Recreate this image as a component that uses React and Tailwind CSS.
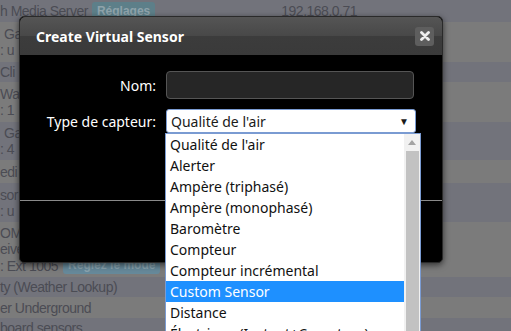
import React from 'react';

const options = [
  "Qualité de l'air",
  'Alerter',
  'Ampère (triphasé)',
  'Ampère (monophasé)',
  'Baromètre',
  'Compteur',
  'Compteur incrémental',
  'Custom Sensor',
  'Distance',
  'Électrique (Instant+Compteur)',
];

function Row({ h, shade, children }) {
  return (
    <div className={`${h} ${shade ? 'bg-[#72737b]' : 'bg-[#7b7b7b]'} flex flex-col justify-center`}>
      {children}
    </div>
  );
}

function Background() {
  return (
    <div
      className="text-[14px] tracking-[-0.5px] leading-[16px] text-[#4b4c54]"
      style={{ fontFamily: '"Liberation Sans", Arial, sans-serif' }}
    >
      <Row h="h-[22px]" shade>
        <div className="flex items-center">
          <span>h Media Server</span>
          <span className="ml-[4px] px-[5px] rounded-[3px] bg-[#5d7f89] text-[#8fa3ab] font-bold text-[12px] tracking-normal leading-[18px]">Réglages</span>
          <span className="ml-[126px]">192.168.0.71</span>
        </div>
      </Row>
      <Row h="h-[40px]">
        <div className="pl-[4px]">Ga</div>
        <div>: u</div>
      </Row>
      <Row h="h-[20px]" shade>
        <div>Cli</div>
      </Row>
      <Row h="h-[40px]">
        <div>Wa</div>
        <div>: 1</div>
      </Row>
      <Row h="h-[38px]" shade>
        <div className="pl-[4px]">Ga</div>
        <div>: 4</div>
      </Row>
      <Row h="h-[23px]">
        <div>edi</div>
      </Row>
      <Row h="h-[39px]" shade>
        <div>sor</div>
        <div>: u</div>
      </Row>
      <Row h="h-[55px]">
        <div>OM</div>
        <div>eive</div>
        <div className="flex items-center">
          <span>: Ext 1005</span>
          <span className="ml-[5px] px-[5px] rounded-[3px] bg-[#66899a] text-[#8aa3ae] font-bold text-[12px] tracking-normal leading-[17px]">Réglez le mode</span>
        </div>
      </Row>
      <Row h="h-[20px]" shade>
        <div>ty (Weather Lookup)</div>
      </Row>
      <Row h="h-[21px]">
        <div>er Underground</div>
      </Row>
      <Row h="h-[20px]" shade>
        <div>board sensors</div>
      </Row>
    </div>
  );
}

export default function App() {
  return (
    <div
      className="relative w-[511px] h-[331px] overflow-hidden"
      style={{ fontFamily: '"Noto Sans", "Open Sans", sans-serif' }}
    >
      <Background />

      <div className="absolute left-[19px] top-[16px] w-[424px] h-[247px] bg-black rounded-[5px] border border-[#2a2a2a] shadow-[0_2px_6px_rgba(0,0,0,0.6)] flex flex-col overflow-hidden">
        <div className="h-[38px] bg-[linear-gradient(#555_0%,#484848_50%,#3c3c3c_51%,#3a3a3a_100%)] flex items-center justify-between pl-[16px] pr-[8px] rounded-t-[5px]">
          <span className="text-white font-bold text-[14px]">Create Virtual Sensor</span>
          <span className="w-[19px] h-[19px] rounded-[3px] bg-[#5e5e5e] flex items-center justify-center">
            <svg width="10" height="10" viewBox="0 0 10 10">
              <path d="M1.5 1.5 L8.5 8.5 M8.5 1.5 L1.5 8.5" stroke="#ececec" strokeWidth="2.8" strokeLinecap="round" />
            </svg>
          </span>
        </div>

        <div className="flex flex-col pt-[16px] h-[145px] gap-[10px] text-white text-[14px]">
          <div className="flex items-center">
            <span className="w-[136px] text-right">Nom:</span>
            <div className="ml-[10px] w-[248px] h-[28px] rounded-[4px] bg-[#262626] border border-[#555]"></div>
          </div>
          <div className="flex items-center">
            <span className="w-[136px] text-right">Type de capteur:</span>
            <div className="ml-[10px] w-[250px] h-[24px] rounded-[3px] bg-white border border-[#7a9bd2] text-[#1a1a1a] flex items-center justify-between pl-[4px] pr-[6px]">
              <span>Qualité de l'air</span>
              <span className="text-[10px]">▼</span>
            </div>
          </div>
        </div>
        <div className="h-[1px] bg-[#8a8a8a]"></div>
      </div>

      <div className="absolute left-[165px] top-[133px] w-[256px] h-[210px] bg-white border border-[#7a9bd2] flex text-[14px] text-[#111]">
        <div className="flex-1 flex flex-col">
          {options.map((o, i) => (
            <div
              key={i}
              className={`h-[21px] leading-[21px] pl-[4px] whitespace-nowrap ${i === 7 ? 'bg-[#1e90ff] text-white' : ''}`}
            >
              {o}
            </div>
          ))}
        </div>
        <div className="w-[16px] bg-[#f1f1f1] flex flex-col items-center">
          <div className="h-[17px] flex items-center justify-center">
            <svg width="8" height="5" viewBox="0 0 8 5">
              <path d="M0 5 L4 0 L8 5 Z" fill="#a3a3a3" />
            </svg>
          </div>
          <div className="w-[13px] flex-1 bg-[#c2c2c2]"></div>
        </div>
      </div>
    </div>
  );
}
